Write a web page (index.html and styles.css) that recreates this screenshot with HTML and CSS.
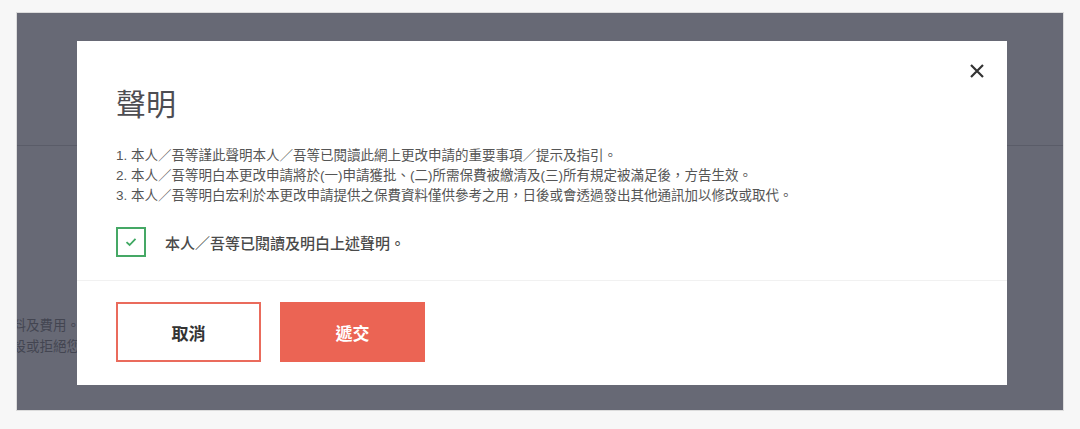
FILE: index.html
```html
<!DOCTYPE html>
<html lang="zh-Hant">
<head>
<meta charset="utf-8">
<title>聲明</title>
<link rel="stylesheet" href="styles.css">
</head>
<body>
<div class="frame">
  <div class="page">
    <div class="page-header"></div>
    <div class="page-body">
      <p>資料及費用。</p>
      <p>建設或拒絕您</p>
    </div>
  </div>
  <div class="overlay">
    <div class="modal">
      <button class="close" aria-label="關閉">
        <svg viewBox="0 0 16 16" width="16" height="16"><path d="M2 2L14 14M14 2L2 14" stroke="#333" stroke-width="2.2" fill="none"/></svg>
      </button>
      <h1 class="title">聲明</h1>
      <div class="modal-body">
        <ol class="terms">
          <li>1. 本人／吾等謹此聲明本人／吾等已閱讀此網上更改申請的重要事項／提示及指引。</li>
          <li>2. 本人／吾等明白本更改申請將於(一)申請獲批、(二)所需保費被繳清及(三)所有規定被滿足後，方告生效。</li>
          <li>3. 本人／吾等明白宏利於本更改申請提供之保費資料僅供參考之用，日後或會透過發出其他通訊加以修改或取代。</li>
        </ol>
        <label class="agree">
          <span class="box"><svg viewBox="0 0 12 10" width="12" height="10"><path d="M1.5 5.2L4.6 8L10.5 1.8" stroke="#3fa862" stroke-width="1.8" fill="none"/></svg></span>
          <span class="agree-text">本人／吾等已閱讀及明白上述聲明。</span>
        </label>
      </div>
      <div class="modal-foot">
        <button class="btn btn-cancel">取消</button>
        <button class="btn btn-submit">遞交</button>
      </div>
    </div>
  </div>
</div>
</body>
</html>
```

FILE: styles.css
```css
html, body {
  margin: 0;
  padding: 0;
}
body {
  background: #f7f7f7;
  padding: 12px 16px;
  font-family: "Liberation Sans", "Noto Sans CJK TC", sans-serif;
}
.frame {
  position: relative;
  width: 1046px;
  height: 397px;
  border: 1px solid #dcdcdc;
  background: #fff;
  overflow: hidden;
}
.page-header {
  height: 132px;
  border-bottom: 1px solid #d3d3d3;
}
.page-body {
  padding-top: 169px;
  margin-left: -18px;
  font-size: 13.5px;
  line-height: 21px;
  color: #888;
}
.page-body p {
  margin: 0;
  white-space: nowrap;
}
.overlay {
  position: absolute;
  inset: 0;
  background: rgba(38, 42, 59, 0.7);
  display: flex;
  align-items: flex-start;
  padding: 28px 56px 0 60px;
}
.modal {
  position: relative;
  width: 930px;
  height: 344px;
  background: #fff;
  box-sizing: border-box;
}
.close {
  position: absolute;
  top: 22px;
  right: 22px;
  width: 16px;
  height: 16px;
  padding: 0;
  border: 0;
  background: none;
  display: flex;
}
.title {
  margin: 0;
  padding: 41px 39px 0;
  font-size: 30px;
  line-height: 40px;
  font-weight: 400;
  color: #4d4d52;
  font-family: "Noto Sans CJK TC", sans-serif;
}
.modal-body {
  padding: 24px 39px 23px;
  border-bottom: 1px solid #f1f1f1;
}
.terms {
  list-style: none;
  margin: 0;
  padding: 0;
  font-size: 13.5px;
  line-height: 20px;
  color: #555;
}
.agree {
  display: flex;
  align-items: center;
  gap: 19px;
  margin-top: 21px;
  height: 30px;
}
.box {
  width: 30px;
  height: 30px;
  box-sizing: border-box;
  border: 2px solid #45a865;
  display: flex;
  align-items: center;
  justify-content: center;
}
.agree-text {
  font-size: 15px;
  font-weight: 500;
  color: #4a4a4a;
}
.modal-foot {
  display: flex;
  gap: 19px;
  padding: 21px 39px 22px;
}
.btn {
  width: 145px;
  height: 60px;
  box-sizing: border-box;
  font-family: "Noto Sans CJK TC", sans-serif;
  font-size: 17px;
  font-weight: 700;
  cursor: pointer;
}
.btn-cancel {
  background: #fff;
  border: 2px solid #ea6b5c;
  color: #333;
}
.btn-submit {
  background: #eb6454;
  border: 0;
  color: #fff;
}
```
